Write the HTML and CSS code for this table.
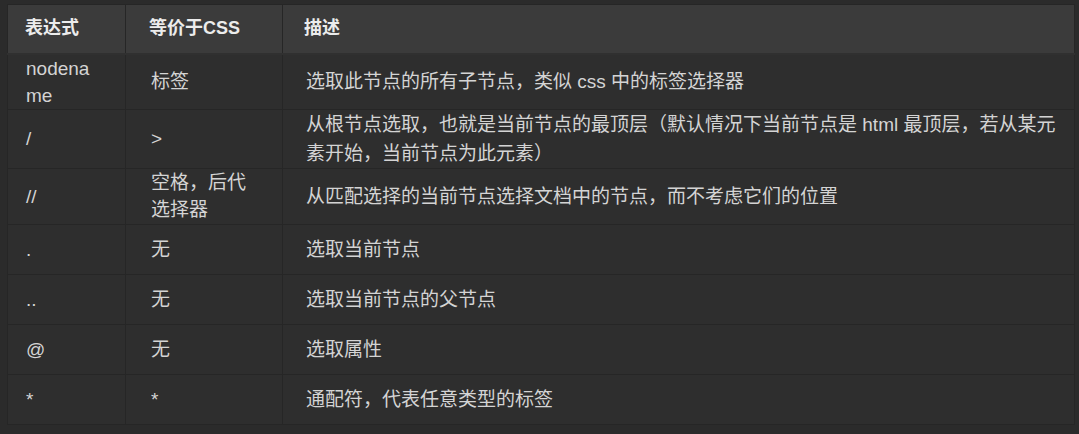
FILE: index.html
```html
<!DOCTYPE html>
<html lang="zh-CN">
<head>
	<meta charset="UTF-8">
	<title>XPath 表达式</title>
	<link rel="stylesheet" href="styles.css">
</head>
<body>
	<table class="xpath-table">
		<thead>
			<tr>
				<th class="col-expr">表达式</th>
				<th class="col-css">等价于CSS</th>
				<th class="col-desc">描述</th>
			</tr>
		</thead>
		<tbody>
			<tr class="row-a">
				<td class="col-expr">nodename</td>
				<td class="col-css">标签</td>
				<td class="col-desc">选取此节点的所有子节点，类似 css 中的标签选择器</td>
			</tr>
			<tr class="row-b">
				<td class="col-expr">/</td>
				<td class="col-css">&gt;</td>
				<td class="col-desc">从根节点选取，也就是当前节点的最顶层（默认情况下当前节点是 html 最顶层，若从某元素开始，当前节点为此元素）</td>
			</tr>
			<tr class="row-c">
				<td class="col-expr">//</td>
				<td class="col-css">空格，后代选择器</td>
				<td class="col-desc">从匹配选择的当前节点选择文档中的节点，而不考虑它们的位置</td>
			</tr>
			<tr>
				<td class="col-expr">.</td>
				<td class="col-css">无</td>
				<td class="col-desc">选取当前节点</td>
			</tr>
			<tr>
				<td class="col-expr">..</td>
				<td class="col-css">无</td>
				<td class="col-desc">选取当前节点的父节点</td>
			</tr>
			<tr>
				<td class="col-expr">@</td>
				<td class="col-css">无</td>
				<td class="col-desc">选取属性</td>
			</tr>
			<tr>
				<td class="col-expr">*</td>
				<td class="col-css">*</td>
				<td class="col-desc">通配符，代表任意类型的标签</td>
			</tr>
		</tbody>
	</table>
</body>
</html>
```

FILE: styles.css
```css
* {
	box-sizing: border-box;
	margin: 0;
	padding: 0;
}

body {
	background: #2b2b2b;
	font-family: "Liberation Sans", "Noto Sans CJK SC", sans-serif;
	color: #d4d4d4;
	padding: 4px 4px 0 7px;
}

.xpath-table {
	width: 1068px;
	border-collapse: collapse;
	table-layout: fixed;
	font-size: 19px;
}

.xpath-table th,
.xpath-table td {
	text-align: left;
	vertical-align: middle;
	border: 1px solid #262626;
	line-height: 27px;
	word-break: break-all;
}

.xpath-table th {
	background: #3b3b3b;
	color: #ececec;
	font-weight: bold;
	font-size: 18px;
	height: 49px;
	border-bottom: 2px solid #303030;
}

.xpath-table td {
	background: #2e2e2e;
	height: 50px;
	padding-top: 0;
	padding-bottom: 0;
}

.row-a td { height: 55px; }
.row-b td { height: 59px; line-height: 29px; }
.row-c td { height: 56px; }

.col-expr {
	width: 118px;
	padding-left: 18px;
	padding-right: 22px;
}

th.col-expr { padding-left: 17px; }

.col-css {
	width: 157px;
	padding-left: 25px;
	padding-right: 30px;
}

th.col-css { padding-left: 23px; }

.col-desc {
	padding-left: 23px;
	padding-right: 16px;
}

th.col-desc { padding-left: 21px; }
```
